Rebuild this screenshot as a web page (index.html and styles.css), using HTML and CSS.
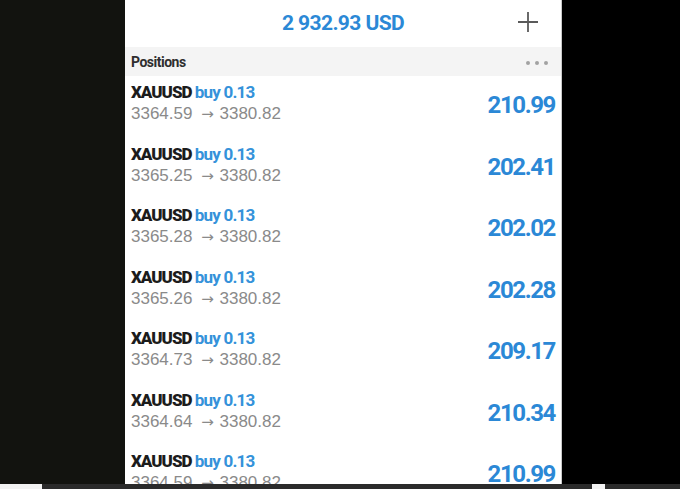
FILE: index.html
```html
<!DOCTYPE html>
<html lang="en">
<head>
    <meta charset="UTF-8">
    <meta name="viewport" content="width=device-width, initial-scale=1.0">
    <title>Trade</title>
    <link rel="stylesheet" href="styles.css">
</head>
<body>
    <div class="screen">
        <div class="side side-left"></div>
        <div class="panel">
            <div class="balance-bar">
                <span class="balance">2 932.93 USD</span>
                <svg class="plus-icon" width="22" height="22" viewBox="0 0 22 22">
                    <path d="M11 1v20M1 11h20" stroke="#5a5a5a" stroke-width="1.8" fill="none"/>
                </svg>
            </div>
            <div class="section-bar">
                <span class="section-title">Positions</span>
                <span class="dots"><i></i><i></i><i></i></span>
            </div>
            <div class="positions">
                <div class="position">
                    <div class="position-info">
                        <div class="symbol">XAUUSD <span class="side-type">buy 0.13</span></div>
                        <div class="prices">3364.59 <span class="arrow">&rarr;</span> 3380.82</div>
                    </div>
                    <div class="profit">210.99</div>
                </div>
                <div class="position">
                    <div class="position-info">
                        <div class="symbol">XAUUSD <span class="side-type">buy 0.13</span></div>
                        <div class="prices">3365.25 <span class="arrow">&rarr;</span> 3380.82</div>
                    </div>
                    <div class="profit">202.41</div>
                </div>
                <div class="position">
                    <div class="position-info">
                        <div class="symbol">XAUUSD <span class="side-type">buy 0.13</span></div>
                        <div class="prices">3365.28 <span class="arrow">&rarr;</span> 3380.82</div>
                    </div>
                    <div class="profit">202.02</div>
                </div>
                <div class="position">
                    <div class="position-info">
                        <div class="symbol">XAUUSD <span class="side-type">buy 0.13</span></div>
                        <div class="prices">3365.26 <span class="arrow">&rarr;</span> 3380.82</div>
                    </div>
                    <div class="profit">202.28</div>
                </div>
                <div class="position">
                    <div class="position-info">
                        <div class="symbol">XAUUSD <span class="side-type">buy 0.13</span></div>
                        <div class="prices">3364.73 <span class="arrow">&rarr;</span> 3380.82</div>
                    </div>
                    <div class="profit">209.17</div>
                </div>
                <div class="position">
                    <div class="position-info">
                        <div class="symbol">XAUUSD <span class="side-type">buy 0.13</span></div>
                        <div class="prices">3364.64 <span class="arrow">&rarr;</span> 3380.82</div>
                    </div>
                    <div class="profit">210.34</div>
                </div>
                <div class="position">
                    <div class="position-info">
                        <div class="symbol">XAUUSD <span class="side-type">buy 0.13</span></div>
                        <div class="prices">3364.59 <span class="arrow">&rarr;</span> 3380.82</div>
                    </div>
                    <div class="profit">210.99</div>
                </div>
            </div>
        </div>
        <div class="side side-right"></div>
    </div>
    <div class="bottom-strip">
        <span class="strip-light strip-left"></span>
        <span class="strip-gap"></span>
        <span class="strip-light strip-square"></span>
        <span class="strip-end"></span>
    </div>
</body>
</html>
```

FILE: styles.css
```css
body {
    margin: 0;
    padding: 0;
    background-color: #000000;
    font-family: 'Roboto', sans-serif;
    width: 680px;
    height: 489px;
    overflow: hidden;
}
.screen {
    display: flex;
    height: 484px;
}
.side-left {
    width: 125px;
    background-color: #12130f;
}
.side-right {
    flex: 1;
    background-color: #000000;
}
.panel {
    width: 436px;
    background-color: #ffffff;
    border-right: 1px solid #c9c9c9;
    overflow: hidden;
    display: flex;
    flex-direction: column;
}
.balance-bar {
    height: 47px;
    flex-shrink: 0;
    display: flex;
    align-items: center;
    justify-content: center;
    position: relative;
}
.balance {
    font-size: 21px;
    font-weight: bold;
    color: #2b88d6;
    letter-spacing: -0.6px;
    margin-bottom: 1px;
}
.plus-icon {
    position: absolute;
    right: 22px;
    top: 11px;
}
.section-bar {
    height: 29px;
    flex-shrink: 0;
    background-color: #f4f4f4;
    display: flex;
    align-items: center;
    justify-content: space-between;
    padding: 0 13px 0 6px;
}
.section-title {
    font-size: 14px;
    font-weight: bold;
    color: #2e2e2e;
    letter-spacing: -0.5px;
    margin-top: 1px;
}
.dots {
    display: flex;
    gap: 5px;
    margin-top: 2px;
}
.dots i {
    width: 4px;
    height: 4px;
    border-radius: 50%;
    background-color: #a2a2a2;
}
.position {
    height: 61.5px;
    display: flex;
    justify-content: space-between;
    align-items: flex-start;
    padding: 0 6px;
}
.position-info {
    padding-top: 6px;
}
.symbol {
    font-size: 17px;
    line-height: 20px;
    font-weight: 900;
    color: #1c1c1c;
    letter-spacing: -1px;
}
.side-type {
    font-weight: bold;
    color: #3592da;
    letter-spacing: -0.8px;
}
.prices {
    font-family: 'Liberation Sans', sans-serif;
    font-size: 17px;
    line-height: 20px;
    color: #8a8a8a;
    margin-top: 2px;
}
.arrow {
    font-family: 'DejaVu Sans', sans-serif;
    font-size: 15px;
    margin: 0 1px 0 4px;
}
.profit {
    font-size: 24px;
    line-height: 28px;
    font-weight: bold;
    color: #2b88d6;
    letter-spacing: -1.4px;
    margin-top: 15px;
}
.bottom-strip {
    display: flex;
    height: 5px;
}
.strip-light {
    background-color: #f2f2f2;
}
.strip-left {
    width: 42px;
}
.strip-gap {
    width: 550px;
    background-color: #2b2b2b;
}
.strip-square {
    width: 13px;
}
.strip-end {
    flex: 1;
    background-color: #2b2b2b;
}
```
